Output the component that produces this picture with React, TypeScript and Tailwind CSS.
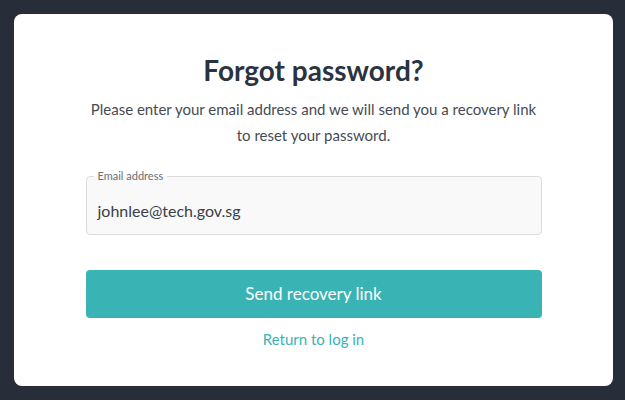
export default function App() {
  return (
    <main className="min-h-screen bg-[#272e3a] pt-[14px] pl-[14px] font-['Lato','Noto_Sans',sans-serif]">
      <div className="bg-white rounded-lg w-[599px] h-[372px] flex flex-col items-center pt-[38px]">
        {/* heading */}
        <h1 className="text-[28px] leading-[36px] font-bold text-[#2b3340]">
          Forgot password?
        </h1>
        <p className="mt-[8px] text-[15px] leading-[26px] text-[#454b54] text-center w-[470px]">
          Please enter your email address and we will send you a recovery link
          <br />
          to reset your password.
        </p>

        {/* email field */}
        <div className="relative mt-[28px] w-[456px] h-[59px] rounded border border-[#dcdcdc] bg-[#f9f9f9]">
          <span className="absolute left-[7px] -top-[8px] px-[4px] text-[11px] leading-[14px] text-[#6b6f75] bg-[linear-gradient(to_bottom,#ffffff_50%,#f9f9f9_50%)]">
            Email address
          </span>
          <div className="pl-[11px] pt-[24px] text-[16px] leading-[20px] text-[#3a3f47]">
            johnlee@tech.gov.sg
          </div>
        </div>

        {/* actions */}
        <button className="mt-[35px] w-[456px] h-[48px] rounded bg-[#3ab3b4] text-white text-[17px]">
          Send recovery link
        </button>
        <a className="mt-[11px] text-[15px] leading-[20px] text-[#3ab3b4] cursor-pointer">
          Return to log in
        </a>
      </div>
    </main>
  );
}
